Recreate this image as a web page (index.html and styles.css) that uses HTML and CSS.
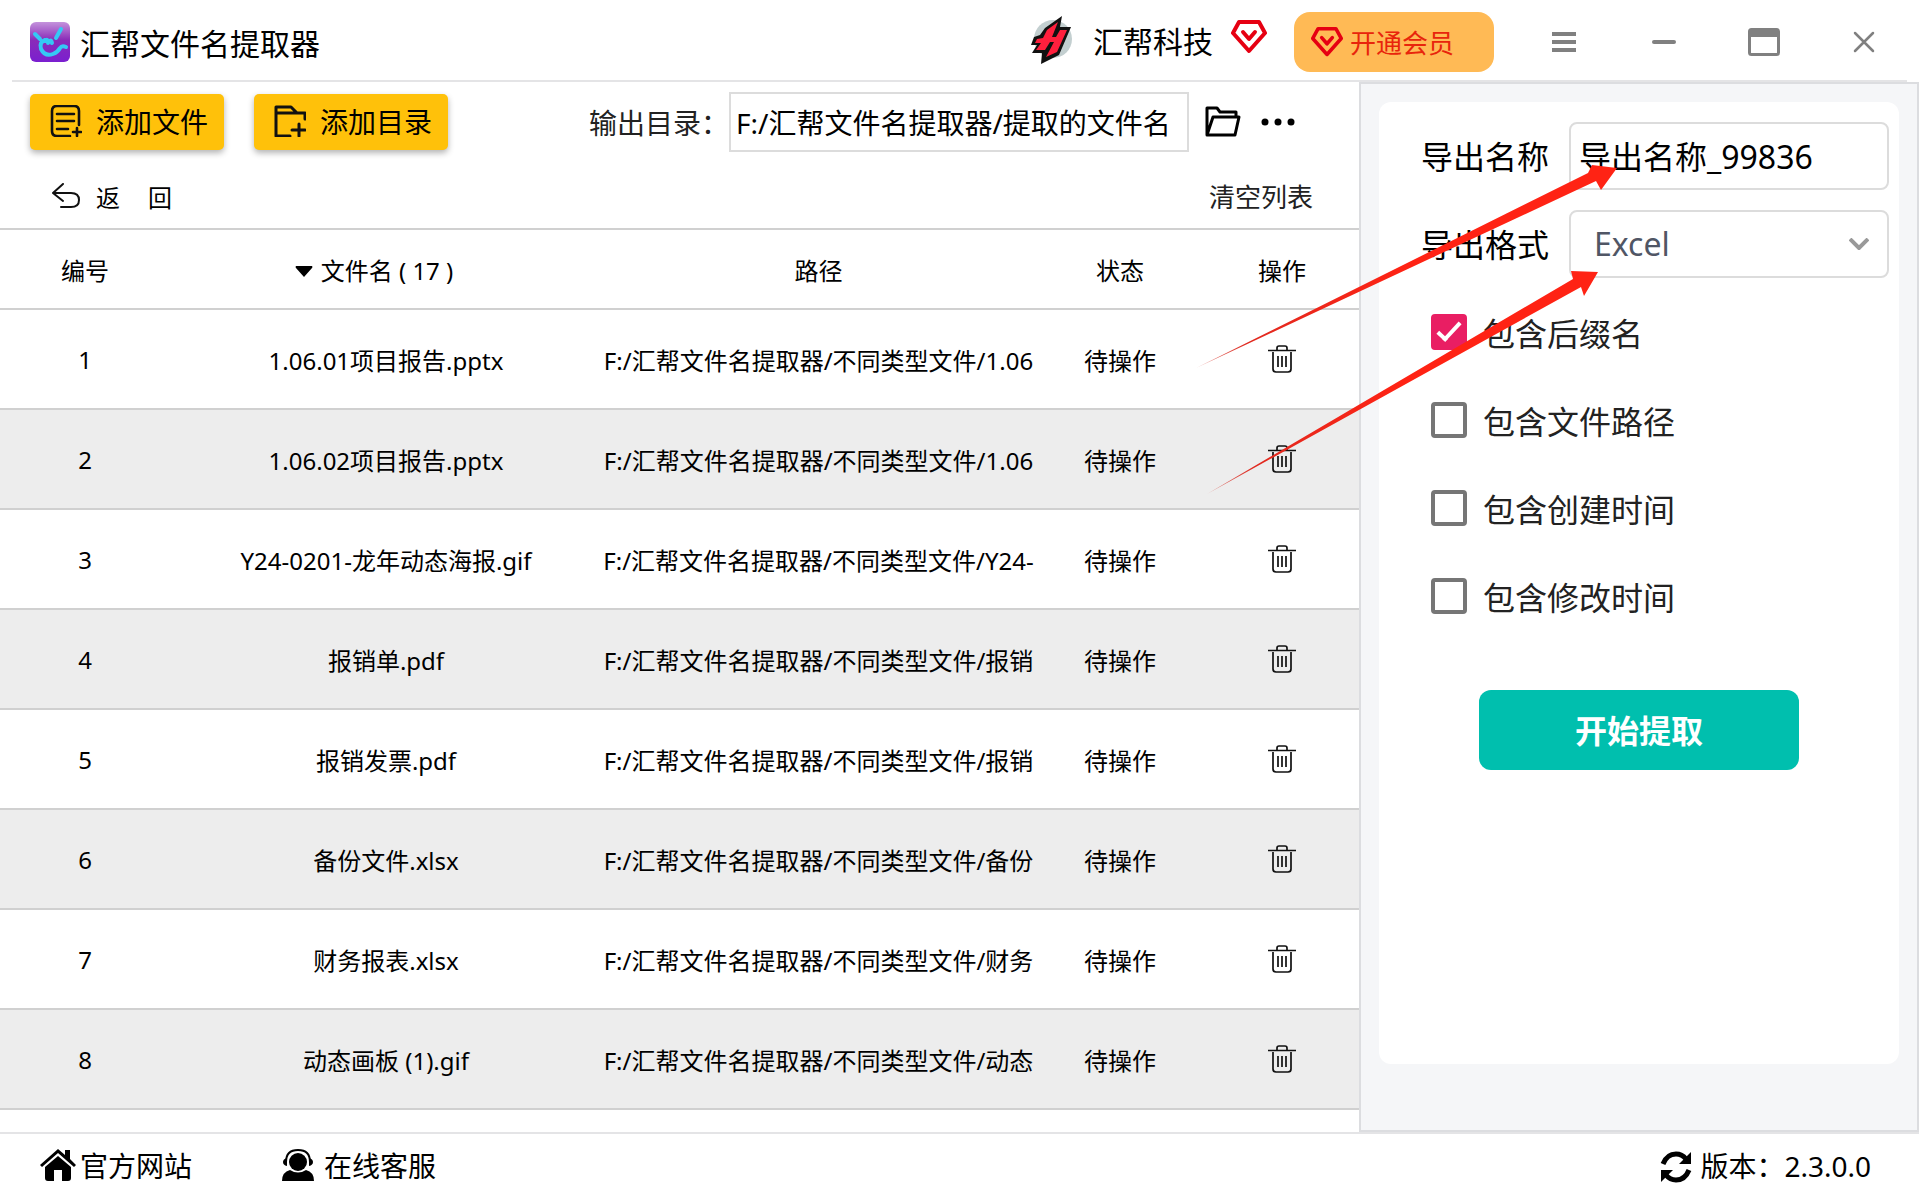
FILE: index.html
```
<!DOCTYPE html>
<html lang="zh-CN">
<head>
    <meta charset="UTF-8">
    <meta name="viewport" content="width=device-width, initial-scale=1.0">
    <title>汇帮文件名提取器</title>
    <link rel="stylesheet" href="styles.css">
</head>
<body>

    <!-- Shared icons -->
    <svg class="icon-defs" aria-hidden="true">
        <symbol id="gem" viewBox="0 0 36 36">
            <path d="M8 3 H28 L34 14 L18 32 L2 14 Z" fill="none" stroke="#e60012" stroke-width="4" stroke-linejoin="round"/>
            <path d="M12 13 L18 20 L24 13" fill="none" stroke="#e60012" stroke-width="4" stroke-linecap="round" stroke-linejoin="round"/>
        </symbol>
        <symbol id="trash" viewBox="0 0 28 28">
            <path d="M0 5.500 H28 M9 5 V3 Q9 1 11 1 H17 Q19 1 19 3 V5 M5 7 V24 Q5 27 8 27 H20 Q23 27 23 24 V7 M10 11 V22 M14 11 V22 M18 11 V22" fill="none" stroke="#111" stroke-width="1.700"/>
        </symbol>
    </svg>

    <!-- Title bar -->
    <header class="titlebar">
        <div class="brand">
            <svg class="brand-logo" viewBox="0 0 40 40">
                <defs>
                    <linearGradient id="logoBg" x1="0" y1="0" x2="0" y2="1">
                        <stop offset="0" stop-color="#c493dc"/>
                        <stop offset="0.450" stop-color="#8a2bb8"/>
                        <stop offset="1" stop-color="#7a1fd0"/>
                    </linearGradient>
                </defs>
                <rect width="40" height="40" rx="6" fill="url(#logoBg)"/>
                <path d="M5 12 L10 17 M31 7 L26 16 M15 18 Q9 20 11 27 Q15 35 23 32 Q28 30 30 26 Q32 23 36 25 M15 19 Q18 16 18 21 Q21 16 22 21" fill="none" stroke="#35c8f5" stroke-width="4" stroke-linecap="round" stroke-linejoin="round"/>
            </svg>
            <h1>汇帮文件名提取器</h1>
        </div>
        <div class="company">
            <svg class="company-logo" viewBox="0 0 42 48">
                <circle cx="22" cy="23" r="19" fill="#c3cfd0"/>
                <path d="M31 0 L14 12 L9 19 L3 21 L0 29 H6 L1 37 H11 L10 48 L28 39 L40 11 H29 Z" fill="#111"/>
                <path d="M27 6 L16 14 L12 22 L6 23 L4 27 H10 L5 34 H14 L19 26 H23 L15 41 L26 36 L36 14 H29 L25 21 H21 Z" fill="#ff1f3d"/>
            </svg>
            <span class="company-name">汇帮科技</span>
            <svg class="gem"><use href="#gem"/></svg>
        </div>
        <button class="vip" type="button">
            <svg class="vip-gem"><use href="#gem"/></svg>
            开通会员
        </button>
        <nav class="window-buttons">
            <button type="button" aria-label="菜单">
                <svg viewBox="0 0 32 32"><path d="M4 8 H28 M4 16 H28 M4 24 H28" stroke="#808080" stroke-width="4"/></svg>
            </button>
            <button type="button" aria-label="最小化">
                <svg viewBox="0 0 32 32"><path d="M6 16 H26" stroke="#808080" stroke-width="4" stroke-linecap="round"/></svg>
            </button>
            <button type="button" aria-label="最大化">
                <svg viewBox="0 0 32 32"><rect x="1.500" y="3.500" width="29" height="25" rx="2" fill="none" stroke="#808080" stroke-width="3"/><path d="M1 4 H31 V11 H1 Z" fill="#808080"/></svg>
            </button>
            <button type="button" aria-label="关闭">
                <svg viewBox="0 0 32 32"><path d="M7 7 L25 25 M25 7 L7 25" stroke="#808080" stroke-width="2.500" stroke-linecap="round"/></svg>
            </button>
        </nav>
    </header>

    <main class="content">
        <!-- File list -->
        <section class="files">
            <div class="toolbar">
                <button class="add" type="button">
                    <svg viewBox="0 0 32 32" fill="none" stroke="#111" stroke-width="2.600" stroke-linecap="round"><path d="M29 20 V6 Q29 1 24 1 H7 Q2 1 2 6 V26 Q2 31 7 31 H20 M7 9 H24 M7 16 H24 M7 24 H18 M27 23 V31 M23 27 H31"/></svg>
                    添加文件
                </button>
                <button class="add" type="button">
                    <svg viewBox="0 0 32 32" fill="none" stroke="#111" stroke-width="3" stroke-linecap="round" stroke-linejoin="round"><path d="M16 31 H2 V2 H17 L23 8 H31 V14 M2 8 H22 M25 19 V31 M18 25 H31"/></svg>
                    添加目录
                </button>
                <div class="output">
                    <label for="outputDir">输出目录：</label>
                    <input type="text" id="outputDir" value="F:/汇帮文件名提取器/提取的文件名">
                    <button type="button" aria-label="打开目录">
                        <svg class="folder" viewBox="0 0 36 32" fill="none" stroke="#000" stroke-width="3" stroke-linejoin="round"><path d="M2 29 V2 H12 L15 6 H31 V11 M2 29 L8 11 H34 L30 29 Z"/></svg>
                    </button>
                    <button class="more" type="button" aria-label="更多">
                        <svg class="dots" viewBox="0 0 34 8"><circle cx="4" cy="4" r="3.500"/><circle cx="17" cy="4" r="3.500"/><circle cx="30" cy="4" r="3.500"/></svg>
                    </button>
                </div>
            </div>

            <div class="subbar">
                <button class="back" type="button">
                    <svg viewBox="0 0 28 26" fill="none" stroke="#111" stroke-width="2" stroke-linecap="round" stroke-linejoin="round"><path d="M11 1 L1 10 L11 18 M1 10 H19 Q27 10 27 17 Q27 24 19 24 H9"/></svg>
                    <span>返</span><span>回</span>
                </button>
                <button class="clear" type="button">清空列表</button>
            </div>

            <table>
                <colgroup>
                    <col class="col-number"><col class="col-name"><col class="col-path"><col class="col-state"><col class="col-action">
                </colgroup>
                <thead>
                    <tr>
                        <th>编号</th>
                        <th class="sortable"><svg class="sort" viewBox="0 0 18 11"><path d="M1 0 H17 Q18 1 17 2 L9 11 L1 2 Q0 1 1 0 Z"/></svg>文件名 ( 17 )</th>
                        <th>路径</th>
                        <th>状态</th>
                        <th>操作</th>
                    </tr>
                </thead>
                <tbody>
                    <tr><td>1</td><td>1.06.01项目报告.pptx</td><td>F:/汇帮文件名提取器/不同类型文件/1.06</td><td>待操作</td><td><button type="button" aria-label="删除"><svg class="trash"><use href="#trash"/></svg></button></td></tr>
                    <tr><td>2</td><td>1.06.02项目报告.pptx</td><td>F:/汇帮文件名提取器/不同类型文件/1.06</td><td>待操作</td><td><button type="button" aria-label="删除"><svg class="trash"><use href="#trash"/></svg></button></td></tr>
                    <tr><td>3</td><td>Y24-0201-龙年动态海报.gif</td><td>F:/汇帮文件名提取器/不同类型文件/Y24-</td><td>待操作</td><td><button type="button" aria-label="删除"><svg class="trash"><use href="#trash"/></svg></button></td></tr>
                    <tr><td>4</td><td>报销单.pdf</td><td>F:/汇帮文件名提取器/不同类型文件/报销</td><td>待操作</td><td><button type="button" aria-label="删除"><svg class="trash"><use href="#trash"/></svg></button></td></tr>
                    <tr><td>5</td><td>报销发票.pdf</td><td>F:/汇帮文件名提取器/不同类型文件/报销</td><td>待操作</td><td><button type="button" aria-label="删除"><svg class="trash"><use href="#trash"/></svg></button></td></tr>
                    <tr><td>6</td><td>备份文件.xlsx</td><td>F:/汇帮文件名提取器/不同类型文件/备份</td><td>待操作</td><td><button type="button" aria-label="删除"><svg class="trash"><use href="#trash"/></svg></button></td></tr>
                    <tr><td>7</td><td>财务报表.xlsx</td><td>F:/汇帮文件名提取器/不同类型文件/财务</td><td>待操作</td><td><button type="button" aria-label="删除"><svg class="trash"><use href="#trash"/></svg></button></td></tr>
                    <tr><td>8</td><td>动态画板 (1).gif</td><td>F:/汇帮文件名提取器/不同类型文件/动态</td><td>待操作</td><td><button type="button" aria-label="删除"><svg class="trash"><use href="#trash"/></svg></button></td></tr>
                </tbody>
            </table>
        </section>

        <!-- Export settings -->
        <aside class="settings">
            <form class="card">
                <div class="field">
                    <label for="exportName">导出名称</label>
                    <input type="text" id="exportName" value="导出名称_99836">
                </div>
                <div class="field">
                    <label for="exportFormat">导出格式</label>
                    <div class="select">
                        <select id="exportFormat">
                            <option>Excel</option>
                        </select>
                        <svg class="chevron" viewBox="0 0 20 12"><path d="M1 1 L10 10 L19 1" fill="none" stroke="#999" stroke-width="4"/></svg>
                    </div>
                </div>
                <label class="check"><input type="checkbox" checked>包含后缀名</label>
                <label class="check"><input type="checkbox">包含文件路径</label>
                <label class="check"><input type="checkbox">包含创建时间</label>
                <label class="check"><input type="checkbox">包含修改时间</label>
                <button class="start" type="button">开始提取</button>
            </form>
        </aside>
    </main>

    <!-- Status bar -->
    <footer class="statusbar">
        <a href="#">
            <svg class="home" viewBox="0 0 36 32"><path d="M18 0 L25 6 V1 H30 V10 L36 16 L34 18 L18 4 L2 18 L0 16 Z"/><path d="M18 7 L31 18 V29 Q31 32 28 32 H22 V21 H14 V32 H8 Q5 32 5 29 V18 Z"/></svg>
            官方网站
        </a>
        <a class="service" href="#">
            <svg class="headset" viewBox="0 0 32 32"><circle cx="16" cy="13" r="9"/><path d="M4 13 Q4 1 16 1 Q28 1 28 13" fill="none" stroke="#000" stroke-width="2"/><path d="M5 9 V17 Q1 16 1 13 Q1 10 5 9 Z M27 9 V17 Q31 16 31 13 Q31 10 27 9 Z M0 32 Q0 23 8 21 Q16 26 24 21 Q32 23 32 32 Z"/></svg>
            在线客服
        </a>
        <div class="version">
            <svg class="refresh" viewBox="0 0 32 32"><path d="M3 13 Q7 3 16 3 Q22 3 26 8" fill="none" stroke="#000" stroke-width="5"/><path d="M31 1 V13 H19 Z"/><path d="M29 19 Q25 29 16 29 Q10 29 6 24" fill="none" stroke="#000" stroke-width="5"/><path d="M1 31 V19 H13 Z"/></svg>
            版本：2.3.0.0
        </div>
    </footer>

    <!-- Arrows pointing at the export fields -->
    <svg class="arrows" viewBox="0 0 1919 1199" preserveAspectRatio="none" aria-hidden="true">
        <defs>
            <linearGradient id="tail" x1="0" y1="0" x2="1" y2="0">
                <stop offset="0" stop-color="#d02a20" stop-opacity="0.500"/>
                <stop offset="0.120" stop-color="#e02a20"/>
                <stop offset="0.500" stop-color="#ff2314"/>
            </linearGradient>
        </defs>
        <path d="M1196 368 L1588 173 L1592 165 L1617 168 L1601 190 L1596 181 Z" fill="url(#tail)"/>
        <path d="M1207 494 L1573 279 L1571 271 L1598 272 L1584 296 L1581 287 Z" fill="url(#tail)"/>
    </svg>

</body>
</html>
```
FILE: styles.css
```
* {
    margin: 0;
    padding: 0;
    box-sizing: border-box;
}

body {
    position: relative;
    display: flex;
    flex-direction: column;
    height: 100vh;
    overflow: hidden;
    background: #fff;
    color: #000;
    font-family: "Noto Sans", "Noto Sans CJK SC", sans-serif;
    font-size: 24px;
}

button, input, select {
    font: inherit;
    color: inherit;
}

button {
    border: none;
    background: none;
    cursor: pointer;
}

svg {
    display: block;
    flex: none;
}

.icon-defs {
    position: absolute;
    width: 0;
    height: 0;
}

/* Title bar */
.titlebar {
    display: flex;
    align-items: center;
    height: 82px;
    margin: 0 12px;
    padding-left: 18px;
    border-bottom: 2px solid #e4e4e6;
}

.brand {
    display: flex;
    align-items: center;
    gap: 10px;
    flex: 1;
    padding-top: 4px;
}

.brand-logo {
    width: 40px;
    height: 40px;
}

h1 {
    font-size: 30px;
    font-weight: normal;
}

.company {
    display: flex;
    align-items: center;
    font-size: 30px;
}

.company-logo {
    width: 42px;
    height: 48px;
    margin-right: 20px;
}

.gem {
    width: 36px;
    height: 36px;
    margin: 0 27px 6px 18px;
}

.vip {
    display: flex;
    align-items: center;
    gap: 7px;
    width: 200px;
    height: 60px;
    margin-bottom: -4px;
    padding-left: 17px;
    border-radius: 16px;
    background: #ffba55;
    color: #e8250c;
    font-size: 26px;
}

.vip-gem {
    width: 32px;
    height: 32px;
}

.window-buttons {
    display: flex;
    gap: 68px;
    padding: 4px 27px 0 54px;
}

.window-buttons svg {
    width: 32px;
    height: 32px;
}

/* Main area */
.content {
    display: flex;
    flex: 1;
    min-height: 0;
}

.files {
    flex: 1;
    min-width: 0;
    overflow: hidden;
}

.toolbar {
    display: flex;
    align-items: center;
    gap: 30px;
    padding: 10px 64px 0 30px;
}

.add {
    display: flex;
    align-items: center;
    gap: 14px;
    height: 56px;
    padding: 0 16px 2px 20px;
    border-radius: 5px;
    background: #ffc10a;
    box-shadow: 0 3px 6px rgba(0, 0, 0, 0.3);
    font-size: 28px;
}

.add svg {
    width: 32px;
    height: 32px;
}

.output {
    display: flex;
    align-items: center;
    gap: 16px;
    margin-left: auto;
    font-size: 28px;
}

.output label {
    margin-right: -16px;
    color: #222;
}

.output input {
    width: 460px;
    height: 60px;
    padding: 0 5px;
    border: 2px solid #dcdcdc;
}

.more {
    margin-left: 4px;
}

.folder {
    width: 36px;
    height: 32px;
}

.dots {
    width: 34px;
    height: 8px;
}

.subbar {
    display: flex;
    align-items: center;
    justify-content: space-between;
    height: 76px;
    padding: 12px 46px 0 52px;
}

.back {
    display: flex;
    align-items: center;
    gap: 16px;
}

.back svg {
    width: 28px;
    height: 26px;
}

.back span + span {
    margin-left: 12px;
}

.clear {
    color: #222;
    font-size: 26px;
}

/* File table */
table {
    width: 100%;
    table-layout: fixed;
    border-collapse: separate;
    border-spacing: 0;
    border-top: 2px solid #d0d0d0;
}

.col-number, .col-state {
    width: 170px;
}

.col-path {
    width: 433px;
}

.col-action {
    width: 154px;
}

th, td {
    height: 100px;
    border-bottom: 2px solid #d0d0d0;
    font-weight: normal;
    text-align: center;
    white-space: nowrap;
    overflow: hidden;
}

th {
    height: 80px;
}

.sortable {
    padding-right: 24px;
}

tbody tr:nth-child(even) {
    background: #ededed;
}

.sort {
    display: inline-block;
    width: 18px;
    height: 11px;
    margin: 0 8px 4px 0;
    vertical-align: middle;
}

.trash {
    width: 28px;
    height: 28px;
    margin-bottom: 4px;
}

td button {
    vertical-align: middle;
}

/* Settings panel */
.settings {
    width: 560px;
    padding: 18px;
    border: 2px solid #dcdde0;
    background: #f5f6f8;
}

.card {
    display: flex;
    flex-direction: column;
    gap: 20px;
    height: 962px;
    padding: 20px 10px 20px 42px;
    border-radius: 12px;
    background: #fff;
    font-size: 32px;
}

.field {
    display: flex;
    align-items: center;
    gap: 20px;
}

.field label {
    padding-bottom: 2px;
}

.field input, .select {
    flex: 1;
    min-width: 0;
    height: 68px;
    border: 2px solid #dcdcdc;
    border-radius: 8px;
}

.field input {
    padding: 0 8px 2px;
}

.select {
    position: relative;
}

.select select {
    width: 100%;
    height: 100%;
    padding: 0 23px 2px;
    border: none;
    background: none;
    color: #505665;
    appearance: none;
}

.chevron {
    position: absolute;
    top: 26px;
    right: 18px;
    width: 20px;
    height: 12px;
    pointer-events: none;
}

.check {
    display: flex;
    align-items: center;
    gap: 16px;
    height: 68px;
    padding-left: 10px;
    color: #222;
}

.check input {
    width: 36px;
    height: 36px;
    border: 4px solid #767676;
    border-radius: 4px;
    appearance: none;
}

.check input:checked {
    border-color: #e91e63;
    background: #e91e63;
}

.check input:checked::before {
    content: "";
    display: block;
    width: 12px;
    height: 24px;
    margin: -1px 0 0 8px;
    border: solid #fff;
    border-width: 0 4px 4px 0;
    box-sizing: border-box;
    transform: rotate(43deg);
}

.start {
    width: 320px;
    height: 80px;
    margin: 40px 0 0 58px;
    padding-bottom: 2px;
    border-radius: 12px;
    background: #00bfae;
    color: #fff;
    font-weight: bold;
}

/* Status bar */
.statusbar {
    display: flex;
    align-items: center;
    height: 67px;
    padding: 0 48px 4px 40px;
    border-top: 2px solid #e4e4e6;
    font-size: 28px;
}

.statusbar a {
    display: flex;
    align-items: center;
    gap: 4px;
    color: #000;
    text-decoration: none;
}

.statusbar .service {
    gap: 10px;
    margin-left: 90px;
}

.home {
    width: 36px;
    height: 32px;
}

.headset, .refresh {
    width: 32px;
    height: 32px;
}

.refresh {
    margin-top: 4px;
}

.version {
    display: flex;
    align-items: center;
    gap: 8px;
    margin-left: auto;
}

/* Pointer arrows over the page */
.arrows {
    position: absolute;
    top: 0;
    left: 0;
    width: 100%;
    height: 100%;
    pointer-events: none;
}
```
